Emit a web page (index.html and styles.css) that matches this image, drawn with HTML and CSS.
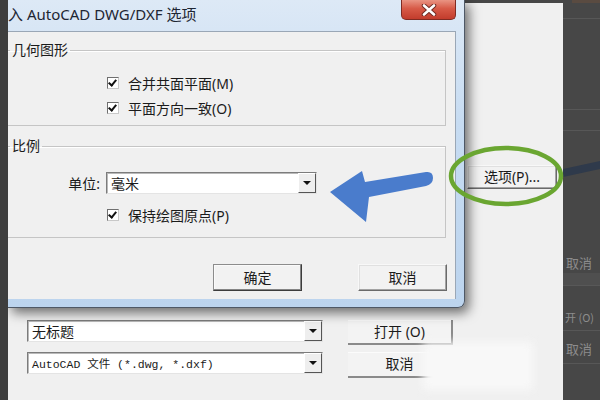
FILE: index.html
```html
<!DOCTYPE html>
<html lang="zh-CN">
<head>
    <meta charset="UTF-8">
    <title>AutoCAD DWG/DXF 选项</title>
    <link rel="stylesheet" href="styles.css">
</head>
<body>
    <div class="edge"></div>

    <div class="screen">
        <!-- window behind the dialog -->
        <div class="main-window">
            <div class="options-row">
                <button class="btn opt">选项(P)...</button>
            </div>
            <div class="file-rows">
                <div class="combo"><span>无标题</span><i class="drop"></i></div>
                <button class="btn flat">打开 (O)</button>
                <div class="combo mono"><span>AutoCAD 文件 (*.dwg, *.dxf)</span><i class="drop"></i></div>
                <button class="btn flat">取消</button>
            </div>
        </div>

        <!-- the options dialog -->
        <div class="dialog">
            <div class="titlebar">
                <span class="title">入 AutoCAD DWG/DXF 选项</span>
                <span class="close">
                    <svg width="16" height="12" viewBox="0 0 16 12">
                        <path d="M3 1.5 L13 10.5 M13 1.5 L3 10.5" stroke="#6e2a22" stroke-width="4.5" stroke-linecap="round"/>
                        <path d="M3 1.5 L13 10.5 M13 1.5 L3 10.5" stroke="#fff" stroke-width="2.6" stroke-linecap="round"/>
                    </svg>
                </span>
            </div>
            <div class="client">
                <fieldset class="group">
                    <legend>几何图形</legend>
                    <label class="check"><i class="box"></i>合并共面平面(M)</label>
                    <label class="check"><i class="box"></i>平面方向一致(O)</label>
                </fieldset>

                <fieldset class="group scale">
                    <legend>比例</legend>
                    <div class="unit-row">
                        <span class="unit-label">单位:</span>
                        <div class="combo unit"><span>毫米</span><i class="drop"></i></div>
                    </div>
                    <label class="check"><i class="box"></i>保持绘图原点(P)</label>
                </fieldset>

                <div class="dialog-buttons">
                    <button class="btn default">确定</button>
                    <button class="btn">取消</button>
                </div>
            </div>
        </div>

        <div class="watermark"></div>
    </div>

    <!-- dark area on the right -->
    <div class="side">
        <div class="side-top"></div>
        <div class="side-line l1"></div>
        <div class="side-line l2"></div>
        <div class="side-line l3"></div>
        <div class="ghost g1">取消</div>
        <div class="side-band"></div>
        <div class="ghost g2">开 (O)</div>
        <div class="side-line l4"></div>
        <div class="ghost g3">取消</div>
        <div class="side-line l5"></div>
    </div>

    <svg class="marks" width="600" height="400" viewBox="0 0 600 400">
        <path d="M563 169 L600 161 L600 169 L563 177 Z" fill="#2f3a4b"/>
        <ellipse cx="506" cy="176" rx="55" ry="28" fill="none" stroke="#6aa631" stroke-width="4.5"/>
        <path d="M330 192 L362 171 L365 182 L426 172 Q433 171 433 178 Q433 184 426 186 L369 197 L366 222 Z" fill="#4a7ccc"/>
    </svg>
</body>
</html>
```

FILE: styles.css
```css
body {
    margin: 0;
    width: 600px;
    height: 400px;
    display: flex;
    position: relative;
    overflow: hidden;
    background-color: #444;
    font-family: "Noto Sans", "Noto Sans CJK SC", sans-serif;
    font-size: 14px;
    color: #1b1b1b;
}
.edge {
    width: 8px;
    background-color: #3e3e3e;
}
.screen {
    width: 555px;
    height: 400px;
    position: relative;
    overflow: hidden;
    background-color: #474747;
}
.main-window {
    margin-top: 3px;
    height: 397px;
    box-sizing: border-box;
    padding: 162px 6px 0 19px;
    background-color: #f0f0f0;
}
.options-row {
    display: flex;
    justify-content: flex-end;
}
.file-rows {
    margin-top: 131px;
    display: grid;
    grid-template-columns: 296px 105px;
    grid-template-rows: 22px 22px;
    column-gap: 25px;
    row-gap: 10px;
}

/* buttons */
.btn {
    font: inherit;
    color: #1b1b1b;
    padding: 0;
    background-color: #f2f2f2;
    border: 1px solid;
    border-color: #f8f8f8 #6a6a6a #6a6a6a #f8f8f8;
    box-shadow: inset -1px -1px #a3a3a3, inset 1px 1px #e0e0e0;
    line-height: 1;
}
.btn.default {
    border-color: #8c8c8c #3c3c3c #3c3c3c #8c8c8c;
    box-shadow: inset -1px -1px #858585, inset 1px 1px #fafafa;
}
.btn.opt {
    width: 90px;
    height: 24px;
}
.btn.flat {
    height: 25px;
    border: none;
    border-right: 2px solid #8a8a8a;
    border-bottom: 2px solid #8a8a8a;
    box-shadow: inset 0 1px #fbfbfb;
    background-color: #f3f3f3;
}
.file-rows .btn.flat:last-child {
    height: 26px;
}

/* combo boxes */
.combo {
    display: flex;
    align-items: center;
    height: 22px;
    box-sizing: border-box;
    background-color: #fff;
    border: 1px solid;
    border-color: #7c7c7c #e4e4e4 #e4e4e4 #7c7c7c;
    box-shadow: inset 1px 1px #b9b9b9;
    padding-left: 4px;
}
.combo span {
    flex: 1;
    white-space: nowrap;
}
.combo.mono {
    font-family: "Liberation Mono", "Noto Sans CJK SC", monospace;
    font-size: 11.5px;
}
.drop {
    width: 18px;
    height: 20px;
    box-sizing: border-box;
    background-color: #eeeeee;
    border: 1px solid;
    border-color: #fff #555 #555 #fff;
    display: flex;
    align-items: center;
    justify-content: center;
}
.drop::after {
    content: "";
    border-left: 4px solid transparent;
    border-right: 4px solid transparent;
    border-top: 4px solid #111;
}

/* dialog */
.dialog {
    position: absolute;
    left: 0;
    top: 0;
    padding: 0 8px 8px 0;
    background: linear-gradient(to bottom, #dde9f6, #c7dcf2 40%, #bcd4ee);
    border-right: 1px solid #4e5866;
    border-bottom: 1px solid #4e5866;
    border-bottom-right-radius: 7px;
    box-shadow: 4px 5px 12px rgba(0, 0, 0, 0.55);
}
.titlebar {
    height: 31px;
    display: flex;
    align-items: flex-start;
}
.title {
    padding-top: 4px;
    font-size: 15px;
    line-height: 20px;
    color: #1e2633;
    white-space: nowrap;
}
.close {
    margin-left: auto;
    width: 55px;
    height: 20px;
    box-sizing: border-box;
    display: flex;
    align-items: center;
    justify-content: center;
    background: linear-gradient(to bottom, #e99483, #d75a47 45%, #c23c2c);
    border: 1px solid #7f2b22;
    border-top: none;
    border-radius: 0 0 5px 5px;
}
.client {
    width: 448px;
    height: 268px;
    box-sizing: border-box;
    overflow: hidden;
    background-color: #f0f0f0;
    border-top: 1px solid #9aa7b6;
    border-right: 1px solid #9aa7b6;
}
.group {
    margin: 8px 9px 0 -8px;
    padding: 10px 0 5px;
    border: 1px solid #c5c5c5;
    box-shadow: inset 1px 1px #fff;
    min-width: 0;
}
.group legend {
    margin-left: 9px;
    padding: 0 2px;
    line-height: 20px;
}
.group.scale {
    margin-top: 10px;
    padding: 15px 0 10px;
}
.check {
    display: flex;
    align-items: center;
    height: 25px;
    padding-left: 106px;
    gap: 9px;
}
.box {
    width: 12px;
    height: 12px;
    box-sizing: border-box;
    background-color: #fff;
    border: 1px solid;
    border-color: #6f6f6f #c8c8c8 #c8c8c8 #6f6f6f;
    position: relative;
}
.box::after {
    content: "";
    position: absolute;
    left: 2px;
    top: 0;
    width: 3px;
    height: 6px;
    border-right: 2px solid #111;
    border-bottom: 2px solid #111;
    transform: rotate(40deg);
}
.unit-row {
    display: flex;
    align-items: center;
    height: 24px;
    margin-bottom: 7px;
}
.unit-label {
    width: 99px;
    margin-right: 6px;
    text-align: right;
}
.combo.unit {
    width: 211px;
}
.dialog-buttons {
    display: flex;
    justify-content: flex-end;
    gap: 56px;
    margin-top: 26px;
    padding-right: 8px;
}
.dialog-buttons .btn {
    width: 89px;
    height: 27px;
}

.watermark {
    position: absolute;
    left: 415px;
    top: 342px;
    width: 110px;
    height: 48px;
    background-color: #f8f8f8;
    filter: blur(4px);
}

/* right dark strip */
.side {
    width: 37px;
    background-color: #474747;
    overflow: hidden;
    color: #8c8c8c;
    font-family: "Noto Sans CJK SC", sans-serif;
}
.side-top {
    height: 3px;
    margin-left: 9px;
    background-color: #5a4b41;
}
.side-line {
    border-top: 1px solid #575757;
}
.l1 { margin-top: 15px; }
.l2 { margin-top: 90px; }
.l3 { margin-top: 20px; }
.ghost {
    height: 20px;
    line-height: 20px;
    white-space: nowrap;
    font-size: 13px;
    padding-left: 3px;
}
.g1 {
    margin-top: 122px;
}
.side-band {
    height: 12px;
    background-color: #4f4f4f;
    border-bottom: 1px solid #585858;
}
.g2 {
    margin-top: 21px;
    font-size: 11px;
    padding-left: 2px;
}
.l4 { margin-top: 3px; }
.g3 {
    margin-top: 8px;
}
.l5 { margin-top: 4px; }

.marks {
    position: absolute;
    left: 0;
    top: 0;
    pointer-events: none;
}
```
